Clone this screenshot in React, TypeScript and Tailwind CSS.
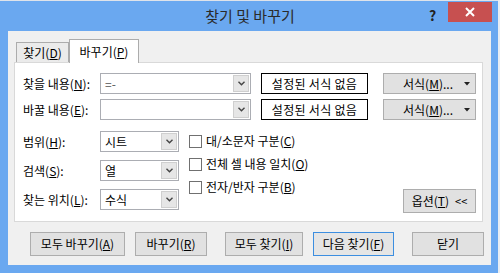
import type { ReactNode } from 'react'

const Chevron = () => (
  <svg width="7" height="5" viewBox="0 0 7 5" fill="none">
    <path d="M0.5 0.8 L3.5 3.8 L6.5 0.8" stroke="#444" strokeWidth="1.4" />
  </svg>
)

function Combo({ w, value, muted }: { w: string; value?: string; muted?: boolean }) {
  return (
    <div className={`${w} h-[21px] flex border border-[#abadb3] bg-white`}>
      <div className={`flex-1 flex items-center pl-[4px] text-[12px] ${muted ? 'text-[#555]' : 'text-black'}`}>{value}</div>
      <div className="w-[16px] m-[1px] flex items-center justify-center bg-[#e6e6e6] border border-[#cfcfcf]">
        <Chevron />
      </div>
    </div>
  )
}

function Btn({ w, children, def }: { w: string; children: ReactNode; def?: boolean }) {
  return (
    <div className={`${w} h-[24px] flex items-center justify-center text-[12px] text-black border ${def ? 'border-[#3c8ee0] bg-[#e5e5e5]' : 'border-[#adadad] bg-[#e1e1e1]'}`}>
      {children}
    </div>
  )
}

function Check({ children }: { children: ReactNode }) {
  return (
    <div className="h-[20px] flex items-center gap-[4px] text-[12px] text-black">
      <div className="w-[13px] h-[13px] border border-[#707070] bg-white" />
      <span>{children}</span>
    </div>
  )
}

function FormatBtn() {
  return (
    <div className="ml-[15px] w-[93px] h-[21px] flex items-center border border-[#adadad] bg-[#e1e1e1] text-[12px] text-black">
      <span className="flex-1 text-center pl-[8px]">서식(<u>M</u>)...</span>
      <svg className="mr-[5px]" width="6" height="4" viewBox="0 0 6 4">
        <path d="M0 0 H6 L3 3.5 Z" fill="#222" />
      </svg>
    </div>
  )
}

const NoFormat = () => (
  <div className="ml-[10px] w-[107px] h-[21px] flex items-center justify-center border border-black bg-white text-[12px] text-black tracking-[0.3px]">
    설정된 서식 없음
  </div>
)

export default function App() {
  return (
    <div className="w-[500px] h-[273px] flex bg-[#e8edf3] font-['Noto_Sans_CJK_KR','Noto_Sans',sans-serif]">
      <div className="relative w-[498px] h-[273px] bg-[#6aa8f0] border-t border-[#dfe3ea]">
        {/* Title bar */}
        <div className="h-[30px] flex items-center justify-center pl-[2px] text-[15px] text-[#2a2a2a]">찾기 및 바꾸기</div>
        <div className="absolute left-[429px] top-[4px] text-[14px] font-bold text-[#222]">?</div>
        <div className="absolute left-[448px] top-[1px] w-[44px] h-[20px] bg-[#c75050] flex items-center justify-center">
          <svg width="10" height="10" viewBox="0 0 10 10">
            <path d="M1 1 L9 9 M9 1 L1 9" stroke="#fff" strokeWidth="2" />
          </svg>
        </div>

        {/* Client area */}
        <div className="ml-[8px] w-[483px] h-[234px] bg-[#f0f0f0] pt-[8px] pl-[6px]">
          {/* Tabs */}
          <div className="h-[23px] flex items-end pl-[2px]">
            <div className="w-[53px] h-[20px] flex items-center justify-center border border-b-0 border-[#acacac] bg-[#ebebeb] text-[12px] text-black">
              찾기(<u>D</u>)
            </div>
            <div className="relative z-10 w-[70px] h-[24px] -mb-px flex items-center justify-center border border-b-0 border-[#acacac] bg-white text-[12px] text-black">
              바꾸기(<u>P</u>)
            </div>
          </div>

          {/* Panel */}
          <div className="w-[469px] h-[160px] bg-white border border-[#d9d9d9]">
            <div className="mt-[10px] flex items-center">
              <div className="pl-[8px] w-[85px] text-[12px] text-black">찾을 내용(<u>N</u>):</div>
              <Combo w="w-[151px]" value="=-" muted />
              <NoFormat />
              <FormatBtn />
            </div>
            <div className="mt-[5px] flex items-center">
              <div className="pl-[8px] w-[85px] text-[12px] text-black">바꿀 내용(<u>E</u>):</div>
              <Combo w="w-[151px]" />
              <NoFormat />
              <FormatBtn />
            </div>

            <div className="mt-[11px] h-[83px] flex">
              <div className="flex flex-col gap-[8px]">
                <div className="flex items-center">
                  <div className="pl-[8px] w-[85px] text-[12px] text-black">범위(<u>H</u>):</div>
                  <Combo w="w-[79px]" value="시트" />
                </div>
                <div className="flex items-center">
                  <div className="pl-[8px] w-[85px] text-[12px] text-black">검색(<u>S</u>):</div>
                  <Combo w="w-[79px]" value="열" />
                </div>
                <div className="flex items-center">
                  <div className="pl-[8px] w-[85px] text-[12px] text-black">찾는 위치(<u>L</u>):</div>
                  <Combo w="w-[79px]" value="수식" />
                </div>
              </div>
              <div className="ml-[10px] flex flex-col gap-[3px]">
                <Check>대/소문자 구분(<u>C</u>)</Check>
                <Check>전체 셀 내용 일치(<u>O</u>)</Check>
                <Check>전자/반자 구분(<u>B</u>)</Check>
              </div>
              <div className="flex-1 flex items-end justify-end pr-[6px] pb-[1px]">
                <div className="w-[73px] h-[24px] flex items-center justify-center gap-[6px] border border-[#adadad] bg-[#e1e1e1] text-[12px] text-black">
                  <span>옵션(<u>T</u>)</span>
                  <span className="text-[11px]">&lt;&lt;</span>
                </div>
              </div>
            </div>
          </div>

          {/* Bottom buttons */}
          <div className="mt-[10px] ml-[16px] flex">
            <Btn w="w-[95px]">모두 바꾸기(<u>A</u>)</Btn>
            <div className="ml-[10px]"><Btn w="w-[72px]">바꾸기(<u>R</u>)</Btn></div>
            <div className="ml-[18px]"><Btn w="w-[78px]">모두 찾기(<u>I</u>)</Btn></div>
            <div className="ml-[10px]"><Btn w="w-[81px]" def>다음 찾기(<u>F</u>)</Btn></div>
            <div className="ml-[18px]"><Btn w="w-[72px]">닫기</Btn></div>
          </div>
        </div>
      </div>
    </div>
  )
}
